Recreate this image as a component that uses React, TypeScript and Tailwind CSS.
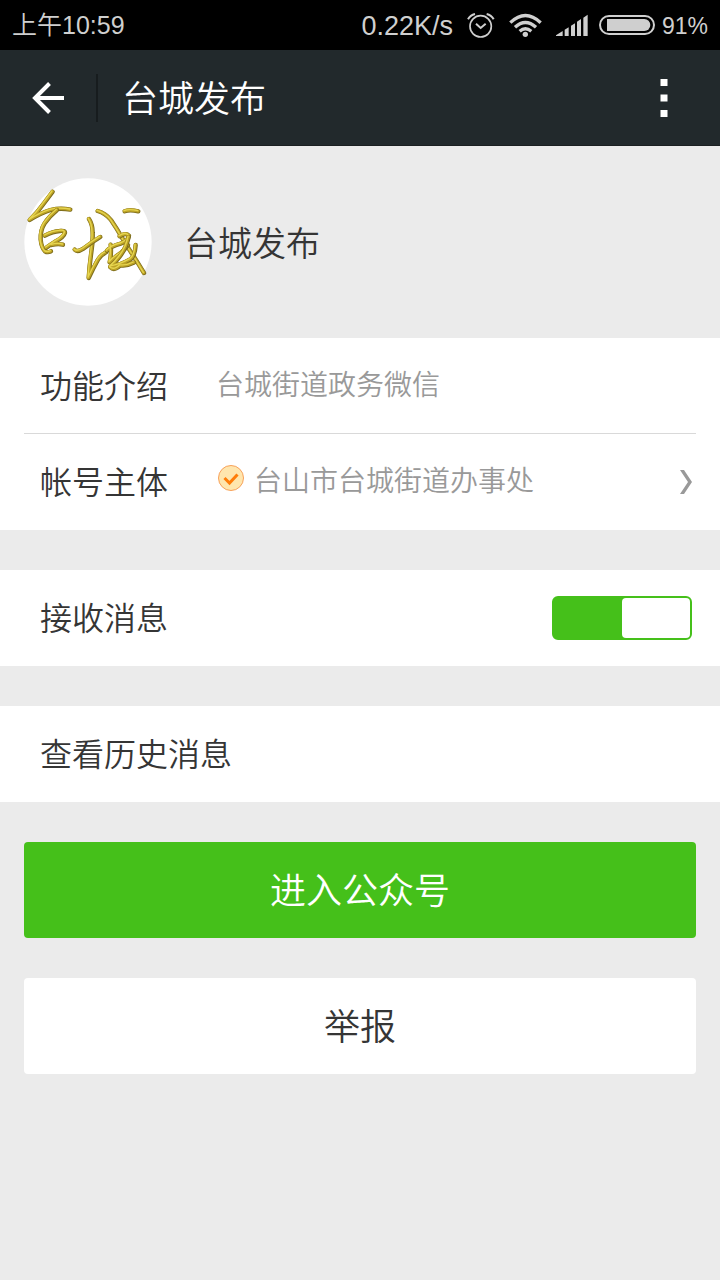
import React from "react";

function StatusBar() {
  return (
    <div className="flex h-[50px] items-center justify-between bg-black pl-3 pr-3 font-['Liberation_Sans','Noto_Sans_CJK_SC',sans-serif] text-[#cfcfcf]">
      <span className="text-[25px] leading-8">上午10:59</span>
      <div className="flex items-center">
        <span className="pt-0.5 text-[27px] leading-8">0.22K/s</span>
        <svg viewBox="350 30 84 84" className="ml-3.5 size-7" fill="none" stroke="currentColor" strokeWidth="5">
          <circle cx="391" cy="76" r="32" />
          <path d="M377 68l14 13 15-13" strokeWidth="6" />
          <path d="M353 55q7-13 21-16M430 55q-7-13-21-16" strokeWidth="6" />
        </svg>
        <svg viewBox="477 36 99 72" className="ml-3.5 h-6 w-[33px]" fill="none" stroke="currentColor" strokeWidth="10">
          <path d="M481 65q45-43 91 0" />
          <path d="M495 79q31-29 63 0" />
          <path d="M509 91q17-15 35 0" />
          <circle cx="526" cy="100" r="8" fill="currentColor" stroke="none" />
        </svg>
        <svg viewBox="617 42 96 66" className="ml-3.5 h-[22px] w-8" fill="currentColor">
          <path d="M617 108v-2l20-13v15zM643 89l12-7v26h-12zM662 77l12-7v38h-12zM680 65l12-8v51h-12zM699 53l13-9v64h-13z" />
        </svg>
        <svg viewBox="747 45 168 60" className="ml-[11px] h-5 w-14">
          <rect x="750" y="48" width="162" height="54" rx="27" fill="none" stroke="currentColor" strokeWidth="6" />
          <path d="M771 57h112a18 18 0 0 1 0 36H771z" fill="currentColor" />
        </svg>
        <span className="ml-[7px] pt-0.5 text-[23px] leading-8">91%</span>
      </div>
    </div>
  );
}

function Header() {
  return (
    <header className="flex h-24 items-center border-b border-[#1b1f21] bg-[#22292c] text-white">
      <button type="button" aria-label="返回" className="flex h-12 w-[98px] items-center border-r-2 border-[#171c1e] pl-8">
        <svg viewBox="0 0 32 32" className="size-8" fill="none" stroke="currentColor" strokeWidth="4">
          <path d="M17.5 1.5L3 16l14.500 14.500M3 16h29" />
        </svg>
      </button>
      <h1 className="flex-1 pb-1 pl-6 text-4xl leading-12">台城发布</h1>
      <button type="button" aria-label="更多" className="flex h-12 items-center px-[52px]">
        <svg viewBox="0 0 8 38" className="h-[38px] w-2" fill="currentColor">
          <path d="M0.500 0h7v7h-7zM0.500 15.500h7v7h-7zM0.500 31h7v7h-7z" />
        </svg>
      </button>
    </header>
  );
}

const strokes = [
  "M127 79Q113 98 97 119Q80 143 58 164Q92 143 121 134Q150 127 180 133",
  "M140 134Q116 154 103 174Q90 194 91 222Q93 246 104 258Q112 263 122 258",
  "M104 211Q128 198 148 197Q164 195 164 202Q161 215 133 230Q119 239 108 247M124 239Q143 234 158 238",
  "M236 161Q247 178 247 202Q248 230 243 261Q237 303 235 338Q250 306 263 283Q273 268 287 261",
  "M193 253Q201 262 219 250Q244 231 270 215",
  "M262 137Q286 144 302 164Q320 190 338 222Q358 255 376 282Q387 300 401 323",
  "M343 138Q358 132 384 138",
  "M328 213Q347 201 356 211Q353 227 331 235Q303 242 290 256M301 238Q304 266 298 291Q309 278 329 265Q346 251 353 239",
  "M355 215Q348 248 328 274Q313 294 300 304Q331 299 360 282Q374 273 376 239M300 306Q312 318 330 300Q350 303 371 292",
];

function Avatar() {
  return (
    <svg viewBox="42 39 384 384" className="size-32" fill="none" strokeLinecap="round" strokeLinejoin="round">
      <circle cx="234" cy="231" r="191" fill="#fff" />
      {strokes.map((d) => (
        <g key={d}>
          <path d={d} stroke="#7a6a1c" strokeWidth="13" transform="translate(1 1)" />
          <path d={d} stroke="#bda326" strokeWidth="10" />
          <path d={d} stroke="#e6d550" strokeWidth="4" transform="translate(-1 -1)" />
        </g>
      ))}
    </svg>
  );
}

function VerifiedIcon() {
  return (
    <svg viewBox="0 0 26 26" className="mb-2 size-[26px]" fill="none">
      <circle cx="13" cy="13" r="12.500" fill="#ffe6ae" stroke="#f7a15a" />
      <path d="M6.500 13l5 5 8-8.500" stroke="#ff7d0a" strokeWidth="3" />
    </svg>
  );
}

export default function App() {
  return (
    <div className="min-h-screen bg-[#ebebeb] font-['Noto_Sans_CJK_SC',sans-serif] font-[350] text-[#353535]">
      <StatusBar />
      <Header />
      <main>
        <section className="flex h-48 items-center gap-8 px-6">
          <Avatar />
          <h2 className="text-[34px] leading-12">台城发布</h2>
        </section>

        <section className="bg-white px-6">
          <div className="flex h-24 items-center border-b border-[#d9d9d9] pl-4">
            <span className="w-44 pb-1 text-[32px] leading-12">功能介绍</span>
            <span className="pb-1.5 text-[28px] leading-10 text-[#999]">台城街道政务微信</span>
          </div>
          <a href="#account" className="flex h-24 items-center pl-4">
            <span className="w-[178px] pb-1 text-[32px] leading-12">帐号主体</span>
            <VerifiedIcon />
            <span className="ml-2.5 flex-1 pb-1.5 text-[28px] leading-10 text-[#999]">台山市台城街道办事处</span>
            <svg viewBox="0 0 12 24" className="mr-1 h-6 w-3" fill="#999">
              <path d="M0 0h4l8 12-8 12H0l8-12z" />
            </svg>
          </a>
        </section>

        <section className="mt-10 bg-white">
          <label className="flex h-24 items-center justify-between pl-10 pr-7">
            <span className="pb-1 text-[32px] leading-12">接收消息</span>
            <input
              type="checkbox"
              defaultChecked
              className="flex h-11 w-[140px] appearance-none rounded-md border-2 border-[#b5b5b5] bg-[#b5b5b5] before:h-full before:w-1/2 before:rounded before:bg-white checked:justify-end checked:border-[#45c01a] checked:bg-[#45c01a]"
            />
          </label>
        </section>

        <section className="mt-10 bg-white">
          <a href="#history" className="flex h-24 items-center px-10 pb-1 text-[32px] leading-12">
            查看历史消息
          </a>
        </section>

        <div className="flex flex-col gap-10 px-6 py-10 text-4xl">
          <button type="button" className="h-24 rounded bg-[#45c01a] pb-1 text-white">
            进入公众号
          </button>
          <button type="button" className="h-24 rounded bg-white pb-1">
            举报
          </button>
        </div>
      </main>
    </div>
  );
}
